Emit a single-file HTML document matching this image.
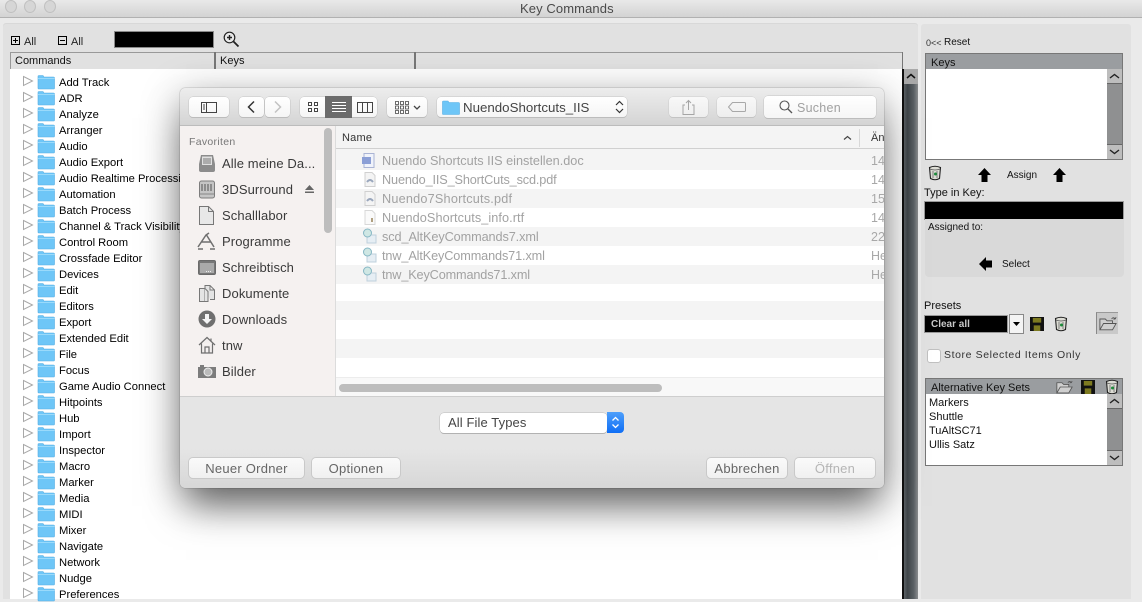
<!DOCTYPE html>
<html><head><meta charset="utf-8"><style>
html,body{margin:0;padding:0}
body{width:1142px;height:599px;overflow:hidden;position:relative;background:#eaeaea;font-family:"Liberation Sans",sans-serif;color:#000}
.a,.t,.r,.f span{position:absolute}
.t{white-space:nowrap;font-size:11px;line-height:14px;margin-top:1px}
.row{position:absolute;left:22px;width:170px;height:16px}
.row svg{position:absolute;left:0;top:0}
.row span{position:absolute;left:37px;top:2px;font-size:11.2px;line-height:14px;white-space:nowrap}
.side{position:absolute;left:198px;font-size:13px;color:#3a3a3a;white-space:nowrap;line-height:16px;letter-spacing:.1px;margin-top:1px}
.frow{position:absolute;left:156px;width:548px;height:19px;background:#f4f4f4}
.frow.w{background:#fff}
.ft{position:absolute;left:202px;font-size:12.7px;color:#a2a2a2;white-space:nowrap;line-height:15px;margin-top:1px}
.dt{position:absolute;left:691px;font-size:12.5px;color:#a8a8a8;line-height:15px;white-space:nowrap;width:13px;overflow:hidden;margin-top:1px}
.btn{position:absolute;background:linear-gradient(#fff,#f5f5f5);border-radius:4px;box-shadow:0 0 0 .5px #c4c4c4,0 1px 0 #b4b4b4;box-sizing:border-box}
.bt{position:absolute;background:linear-gradient(#fafafa,#f0f0f0);border-radius:4px;box-shadow:0 0 0 1px #c9c9c9,0 1px 0 #bbb;text-align:center;font-size:13px;line-height:22px;color:#666;white-space:nowrap;letter-spacing:.25px}
</style></head><body>
<svg width="0" height="0" style="position:absolute"><defs>
<symbol id="row" viewBox="0 0 36 16"><path d="M1.500 2.500 L10.500 7 L1.500 11.500Z" fill="#fff" stroke="#a8a8a8"/><path d="M16 14V2.500Q16 1.500 17 1.500H21L22 3H31.500Q32.500 3 32.500 4V14Q32.500 15 31.500 15H17Q16 15 16 14Z" fill="#6ec6f7" stroke="#57aee3" stroke-width=".6"/><path d="M16 4.500H32.500" stroke="#9adafb"/></symbol>
<symbol id="trash" viewBox="0 0 14 16"><path d="M1.500 2.500Q7 0 12.500 2.500L11.500 13.500Q7 16 2.500 13.500Z" fill="#dcdcd4" stroke="#222" stroke-width="1.100"/><path d="M2 4Q7 6 12 4M5 6V13M9 6V13" stroke="#555" fill="none" stroke-width=".7"/><circle cx="7.500" cy="9" r="1.500" fill="#1d8b3a"/></symbol>
<symbol id="disk" viewBox="0 0 15 15"><path d="M0 0H15V15H0Z" fill="#111"/><path d="M3 1H12V6H3Z" fill="#7d7a20"/><path d="M4 9H11V15H4Z" fill="#7d7a20"/></symbol>
<symbol id="open" viewBox="0 0 20 16"><path d="M1 15V3H7L9 5H15V8M1 15L5 8H19L15 15Z" fill="#cfcfcf" stroke="#555" stroke-width="1"/><path d="M14 3Q16 0 18 3M18 3L19 1M18 3L16 3" stroke="#555" fill="none"/></symbol>
</defs></svg>

<!-- titlebar -->
<div class="a" style="left:0;top:0;width:1142px;height:17px;background:linear-gradient(#e9e9e9,#d3d3d3);border-bottom:1px solid #b1b1b1"></div>
<div class="a" style="left:5px;top:0;width:10px;height:11px;border-radius:50%;background:#d6d6d6;border:1px solid #c0c0c0"></div>
<div class="a" style="left:24px;top:0;width:10px;height:11px;border-radius:50%;background:#d6d6d6;border:1px solid #c0c0c0"></div>
<div class="a" style="left:44px;top:0;width:10px;height:11px;border-radius:50%;background:#d6d6d6;border:1px solid #c0c0c0"></div>
<div class="t" style="left:520px;top:0;font-size:13px;line-height:15px;color:#4a4a4a;letter-spacing:.1px">Key Commands</div>

<!-- main panels -->
<div class="a" style="left:3px;top:24px;width:915px;height:575px;background:#e1e1e1;border-radius:3px 3px 0 0;box-shadow:0 -1px 0 #d8d8d8"></div>
<div class="a" style="left:921px;top:24px;width:210px;height:575px;background:#e1e1e1;border-radius:3px 3px 0 0"></div>

<!-- toolbar -->
<div class="a" style="left:11px;top:36px;width:7px;height:7px;border:1px solid #000"></div><div class="a" style="left:13px;top:40px;width:5px;height:1px;background:#000"></div><div class="a" style="left:15px;top:38px;width:1px;height:5px;background:#000"></div>
<div class="t" style="left:24px;top:34px;font-size:11px;color:#222">All</div>
<div class="a" style="left:58px;top:36px;width:7px;height:7px;border:1px solid #000"></div><div class="a" style="left:60px;top:40px;width:5px;height:1px;background:#000"></div>
<div class="t" style="left:71px;top:34px;font-size:11px;color:#222">All</div>
<div class="a" style="left:115px;top:32px;width:98px;height:15px;background:#000;box-shadow:0 0 0 1px #8a8a8a"></div>
<svg class="a" style="left:222px;top:30px" width="18" height="18" viewBox="0 0 18 18"><circle cx="7.500" cy="7.500" r="5.300" fill="#e8e8e8" stroke="#222" stroke-width="1.200"/><path d="M5 7.500H10M7.500 5V10" stroke="#222" stroke-width="1.400"/><path d="M11.500 11.500L16.500 16.500" stroke="#222" stroke-width="1.800"/></svg>

<!-- header -->
<div class="a" style="left:10px;top:52px;width:893px;height:16px;background:#e1e1e1;border-top:1px solid #999;border-bottom:1px solid #666;box-sizing:content-box"></div>
<div class="a" style="left:10px;top:52px;width:1px;height:17px;background:#999"></div>
<div class="a" style="left:214px;top:52px;width:2px;height:17px;background:#777"></div>
<div class="a" style="left:414px;top:52px;width:2px;height:17px;background:#777"></div>
<div class="a" style="left:902px;top:52px;width:1px;height:17px;background:#777"></div>
<div class="t" style="left:15px;top:53px;font-size:11px;color:#111">Commands</div>
<div class="t" style="left:220px;top:53px;font-size:11px;color:#111">Keys</div>

<!-- tree -->
<div class="a" style="left:10px;top:69px;width:893px;height:530px;background:#fff"></div>
<div class="a" style="left:902px;top:69px;width:2px;height:530px;background:#111"></div>
<div class="a" style="left:904px;top:69px;width:14px;height:15px;background:#a9a9a9;border:0"></div>
<svg class="a" style="left:904px;top:69px" width="14" height="15"><path d="M3 9L7 5.500L11 9" stroke="#111" stroke-width="1.500" fill="none"/></svg>
<div class="a" style="left:904px;top:84px;width:14px;height:515px;background:linear-gradient(90deg,#5c6266,#3f4549 25%,#5b6165 70%,#8a8c8e)"></div>

<div class="row" style="top:74px"><svg width="36" height="16"><use href="#row"/></svg><span>Add Track</span></div>
<div class="row" style="top:90px"><svg width="36" height="16"><use href="#row"/></svg><span>ADR</span></div>
<div class="row" style="top:106px"><svg width="36" height="16"><use href="#row"/></svg><span>Analyze</span></div>
<div class="row" style="top:122px"><svg width="36" height="16"><use href="#row"/></svg><span>Arranger</span></div>
<div class="row" style="top:138px"><svg width="36" height="16"><use href="#row"/></svg><span>Audio</span></div>
<div class="row" style="top:154px"><svg width="36" height="16"><use href="#row"/></svg><span>Audio Export</span></div>
<div class="row" style="top:170px"><svg width="36" height="16"><use href="#row"/></svg><span>Audio Realtime Processing</span></div>
<div class="row" style="top:186px"><svg width="36" height="16"><use href="#row"/></svg><span>Automation</span></div>
<div class="row" style="top:202px"><svg width="36" height="16"><use href="#row"/></svg><span>Batch Process</span></div>
<div class="row" style="top:218px"><svg width="36" height="16"><use href="#row"/></svg><span>Channel &amp; Track Visibility</span></div>
<div class="row" style="top:234px"><svg width="36" height="16"><use href="#row"/></svg><span>Control Room</span></div>
<div class="row" style="top:250px"><svg width="36" height="16"><use href="#row"/></svg><span>Crossfade Editor</span></div>
<div class="row" style="top:266px"><svg width="36" height="16"><use href="#row"/></svg><span>Devices</span></div>
<div class="row" style="top:282px"><svg width="36" height="16"><use href="#row"/></svg><span>Edit</span></div>
<div class="row" style="top:298px"><svg width="36" height="16"><use href="#row"/></svg><span>Editors</span></div>
<div class="row" style="top:314px"><svg width="36" height="16"><use href="#row"/></svg><span>Export</span></div>
<div class="row" style="top:330px"><svg width="36" height="16"><use href="#row"/></svg><span>Extended Edit</span></div>
<div class="row" style="top:346px"><svg width="36" height="16"><use href="#row"/></svg><span>File</span></div>
<div class="row" style="top:362px"><svg width="36" height="16"><use href="#row"/></svg><span>Focus</span></div>
<div class="row" style="top:378px"><svg width="36" height="16"><use href="#row"/></svg><span>Game Audio Connect</span></div>
<div class="row" style="top:394px"><svg width="36" height="16"><use href="#row"/></svg><span>Hitpoints</span></div>
<div class="row" style="top:410px"><svg width="36" height="16"><use href="#row"/></svg><span>Hub</span></div>
<div class="row" style="top:426px"><svg width="36" height="16"><use href="#row"/></svg><span>Import</span></div>
<div class="row" style="top:442px"><svg width="36" height="16"><use href="#row"/></svg><span>Inspector</span></div>
<div class="row" style="top:458px"><svg width="36" height="16"><use href="#row"/></svg><span>Macro</span></div>
<div class="row" style="top:474px"><svg width="36" height="16"><use href="#row"/></svg><span>Marker</span></div>
<div class="row" style="top:490px"><svg width="36" height="16"><use href="#row"/></svg><span>Media</span></div>
<div class="row" style="top:506px"><svg width="36" height="16"><use href="#row"/></svg><span>MIDI</span></div>
<div class="row" style="top:522px"><svg width="36" height="16"><use href="#row"/></svg><span>Mixer</span></div>
<div class="row" style="top:538px"><svg width="36" height="16"><use href="#row"/></svg><span>Navigate</span></div>
<div class="row" style="top:554px"><svg width="36" height="16"><use href="#row"/></svg><span>Network</span></div>
<div class="row" style="top:570px"><svg width="36" height="16"><use href="#row"/></svg><span>Nudge</span></div>
<div class="row" style="top:586px"><svg width="36" height="16"><use href="#row"/></svg><span>Preferences</span></div>

<!-- right panel -->
<div class="t" style="left:926px;top:35px;font-size:9px;color:#333">0&lt;&lt;</div>
<div class="t" style="left:944px;top:35px;font-size:10px;color:#111">Reset</div>
<div class="a" style="left:925px;top:53px;width:198px;height:107px;box-sizing:border-box;border:1px solid #777;background:#fff"></div>
<div class="a" style="left:926px;top:54px;width:196px;height:15px;background:#9a9da0"></div>
<div class="t" style="left:931px;top:55px;font-size:11px;color:#111">Keys</div>
<div class="a" style="left:1107px;top:69px;width:15px;height:90px;background:#8f9091"></div>
<div class="a" style="left:1107px;top:69px;width:15px;height:15px;background:#bdbdbd;border-bottom:1px solid #666;box-sizing:border-box"></div>
<svg class="a" style="left:1107px;top:69px" width="15" height="15"><path d="M3 9L7.500 5.500L12 9" stroke="#222" stroke-width="1.400" fill="none"/></svg>
<div class="a" style="left:1107px;top:144px;width:15px;height:15px;background:#bdbdbd;border-top:1px solid #666;box-sizing:border-box"></div>
<svg class="a" style="left:1107px;top:144px" width="15" height="15"><path d="M3 6L7.500 9.500L12 6" stroke="#222" stroke-width="1.400" fill="none"/></svg>

<svg class="a" style="left:928px;top:165px" width="14" height="16"><use href="#trash"/></svg>
<svg class="a" style="left:977px;top:168px" width="15" height="14"><path d="M7.500 0L14 7H10.500V14H4.500V7H1Z" fill="#000"/></svg>
<div class="t" style="left:1007px;top:168px;font-size:10px;color:#111">Assign</div>
<svg class="a" style="left:1052px;top:168px" width="15" height="14"><path d="M7.500 0L14 7H10.500V14H4.500V7H1Z" fill="#000"/></svg>
<div class="t" style="left:924px;top:185px;font-size:11px;color:#111">Type in Key:</div>
<div class="a" style="left:925px;top:202px;width:198px;height:17px;background:#000;box-shadow:0 0 0 1px #999"></div>
<div class="a" style="left:925px;top:219px;width:199px;height:58px;background:#d9d9d9;border-radius:0 0 4px 4px"></div>
<div class="t" style="left:928px;top:220px;font-size:10px;color:#111">Assigned to:</div>
<svg class="a" style="left:979px;top:257px" width="14" height="14"><path d="M0 7L7 0V3.500H13V10.500H7V14Z" fill="#000"/></svg>
<div class="t" style="left:1002px;top:257px;font-size:10px;color:#111">Select</div>

<div class="t" style="left:924px;top:298px;font-size:11px;color:#111">Presets</div>
<div class="a" style="left:925px;top:316px;width:82px;height:16px;background:#000;box-shadow:0 0 0 1px #999"></div>
<div class="t" style="left:931px;top:317px;font-size:10px;font-weight:bold;color:#c8c8c8">Clear all</div>
<div class="a" style="left:1010px;top:315px;width:13px;height:18px;background:#f4f4f4;box-shadow:0 0 0 1px #888"></div>
<svg class="a" style="left:1012px;top:322px" width="9" height="5"><path d="M1 0H8L4.500 4Z" fill="#000"/></svg>
<svg class="a" style="left:1030px;top:317px" width="14" height="14"><use href="#disk"/></svg>
<svg class="a" style="left:1054px;top:316px" width="14" height="16"><use href="#trash"/></svg>
<div class="a" style="left:1096px;top:312px;width:22px;height:22px;background:#c9c9c9;border-left:1px solid #888;border-top:1px solid #999;box-sizing:border-box"></div>
<svg class="a" style="left:1099px;top:316px" width="18" height="15"><use href="#open"/></svg>
<div class="a" style="left:927px;top:349px;width:12px;height:12px;background:#fff;border:1px solid #c0c0c0;border-radius:3px"></div>
<div class="t" style="left:944px;top:347px;font-size:10.500px;color:#333;letter-spacing:.6px">Store Selected Items Only</div>

<div class="a" style="left:925px;top:378px;width:198px;height:88px;box-sizing:border-box;border:1px solid #777;background:#fff"></div>
<div class="a" style="left:926px;top:379px;width:196px;height:15px;background:#9a9da0"></div>
<div class="t" style="left:931px;top:380px;font-size:11px;color:#111">Alternative Key Sets</div>
<svg class="a" style="left:1056px;top:380px" width="17" height="14"><use href="#open"/></svg>
<svg class="a" style="left:1081px;top:380px" width="14" height="14"><use href="#disk"/></svg>
<svg class="a" style="left:1105px;top:379px" width="14" height="16"><use href="#trash"/></svg>
<div class="t" style="left:929px;top:395px;font-size:11px;color:#111">Markers</div>
<div class="t" style="left:929px;top:409px;font-size:11px;color:#111">Shuttle</div>
<div class="t" style="left:929px;top:423px;font-size:11px;color:#111">TuAltSC71</div>
<div class="t" style="left:929px;top:437px;font-size:11px;color:#111">Ullis Satz</div>
<div class="a" style="left:1107px;top:394px;width:15px;height:71px;background:#8f9091"></div>
<div class="a" style="left:1107px;top:394px;width:15px;height:15px;background:#bdbdbd;border-bottom:1px solid #666;box-sizing:border-box"></div>
<svg class="a" style="left:1107px;top:394px" width="15" height="15"><path d="M3 9L7.500 5.500L12 9" stroke="#222" stroke-width="1.400" fill="none"/></svg>
<div class="a" style="left:1107px;top:450px;width:15px;height:15px;background:#bdbdbd;border-top:1px solid #666;box-sizing:border-box"></div>
<svg class="a" style="left:1107px;top:450px" width="15" height="15"><path d="M3 6L7.500 9.500L12 6" stroke="#222" stroke-width="1.400" fill="none"/></svg>

<!-- dialog -->
<div class="a" style="left:180px;top:88px;width:704px;height:400px;border-radius:5px;overflow:hidden;background:#e5e5e5;box-shadow:0 24px 36px -6px rgba(0,0,0,.5),0 6px 40px rgba(0,0,0,.28),0 0 1px rgba(0,0,0,.6)">
 <div class="a" style="left:0;top:0;width:704px;height:37px;background:linear-gradient(#ededed,#d4d4d4);border-bottom:1px solid #bcbcbc"></div>
 <div class="a" style="left:0;top:38px;width:155px;height:270px;background:#f5f1f0;border-right:1px solid #dcdcdc"></div>
 <div class="a" style="left:156px;top:38px;width:548px;height:270px;background:#fff"></div>
 <div class="a" style="left:156px;top:38px;width:548px;height:22px;background:#f4f4f4;border-bottom:1px solid #d0d0d0"></div>

 <div class="frow" style="top:61px;height:21px"></div><div class="frow w" style="top:82px"></div><div class="frow" style="top:101px"></div><div class="frow w" style="top:120px"></div><div class="frow" style="top:139px"></div><div class="frow w" style="top:158px"></div><div class="frow" style="top:177px"></div><div class="frow w" style="top:196px;height:17px"></div><div class="frow" style="top:213px"></div><div class="frow w" style="top:232px"></div><div class="frow" style="top:251px"></div><div class="frow w" style="top:270px"></div>
 <div class="a" style="left:156px;top:289px;width:548px;height:19px;background:#f8f8f8;border-top:1px solid #ececec;box-sizing:border-box"></div>
 <div class="a" style="left:159px;top:296px;width:323px;height:8px;border-radius:4px;background:#bdbdbd"></div>
 <div class="a" style="left:144px;top:40px;width:8px;height:105px;border-radius:4px;background:#bdbdbd"></div>

 <div class="t" style="left:162px;top:42px;font-size:11px;color:#333;letter-spacing:.2px">Name</div>
 <svg class="a" style="left:663px;top:47px" width="9" height="6"><path d="M1 4.500L4.500 1.500L8 4.500" stroke="#444" stroke-width="1.200" fill="none"/></svg>
 <div class="a" style="left:679px;top:41px;width:1px;height:18px;background:#d8d8d8"></div>
 <div class="t" style="left:691px;top:42px;font-size:11px;color:#333;width:13px;overflow:hidden">Änderungsdatum</div>

 <div class="a" style="left:0;top:1px;width:0;height:0">
 <svg class="a" style="left:182px;top:64px" width="14" height="15"><path d="M2 .5H12V14.500H2Z" fill="#f0f3fb" stroke="#aab4d4"/><path d="M0 4H9V11H0Z" fill="#8b9fd6"/></svg>
 <svg class="a" style="left:184px;top:83px" width="12" height="15"><path d="M1 .5H8L11 3.500V14.500H1Z" fill="#f4f4f4" stroke="#d0d0d0"/><path d="M3 10Q6 6 9 10" stroke="#9aa7bd" stroke-width="2" fill="none"/></svg>
 <svg class="a" style="left:184px;top:102px" width="12" height="15"><path d="M1 .5H8L11 3.500V14.500H1Z" fill="#f4f4f4" stroke="#d0d0d0"/><path d="M3 10Q6 6 9 10" stroke="#9aa7bd" stroke-width="2" fill="none"/></svg>
 <svg class="a" style="left:184px;top:121px" width="12" height="15"><path d="M1 .5H8L11 3.500V14.500H1Z" fill="#fafafa" stroke="#d8d8d8"/><path d="M7 8H9V12H7Z" fill="#b0a080"/></svg>
 <svg class="a" style="left:182px;top:139px" width="15" height="16"><path d="M5 7H14V15H5Z" fill="#e6eef4" stroke="#bfd0dc"/><circle cx="5.500" cy="5" r="4" fill="#cfe7e4" stroke="#86b7c4"/></svg>
 <svg class="a" style="left:182px;top:158px" width="15" height="16"><path d="M5 7H14V15H5Z" fill="#e6eef4" stroke="#bfd0dc"/><circle cx="5.500" cy="5" r="4" fill="#cfe7e4" stroke="#86b7c4"/></svg>
 <svg class="a" style="left:182px;top:177px" width="15" height="16"><path d="M5 7H14V15H5Z" fill="#e6eef4" stroke="#bfd0dc"/><circle cx="5.500" cy="5" r="4" fill="#cfe7e4" stroke="#86b7c4"/></svg>
 </div>

 <div class="ft" style="top:65px">Nuendo Shortcuts IIS einstellen.doc</div><div class="dt" style="top:65px">14.</div>
 <div class="ft" style="top:84px;letter-spacing:-.14px">Nuendo_IIS_ShortCuts_scd.pdf</div><div class="dt" style="top:84px">14.</div>
 <div class="ft" style="top:103px;letter-spacing:.2px">Nuendo7Shortcuts.pdf</div><div class="dt" style="top:103px">15.</div>
 <div class="ft" style="top:122px;letter-spacing:.08px">NuendoShortcuts_info.rtf</div><div class="dt" style="top:122px">14.</div>
 <div class="ft" style="top:141px;letter-spacing:-.09px">scd_AltKeyCommands7.xml</div><div class="dt" style="top:141px">22.</div>
 <div class="ft" style="top:160px;letter-spacing:-.12px">tnw_AltKeyCommands71.xml</div><div class="dt" style="top:160px">Heute</div>
 <div class="ft" style="top:179px;letter-spacing:-.14px">tnw_KeyCommands71.xml</div><div class="dt" style="top:179px">Heute</div>

 <!-- toolbar -->
 <div class="a" style="left:0;top:1px;width:0;height:0">
 <div class="btn" style="left:9px;top:8px;width:40px;height:20px"></div>
 <svg class="a" style="left:21px;top:13px" width="16" height="11"><path d="M.5 .5H15.500V10.500H.5ZM5.500 .5V10.500M2 3H4M2 5H4M2 7H4" stroke="#444" fill="none"/></svg>
 <div class="btn" style="left:59px;top:8px;width:25px;height:20px"></div>
 <svg class="a" style="left:66px;top:11px" width="10" height="14"><path d="M8 1.500L2.500 7L8 12.500" stroke="#333" stroke-width="1.500" fill="none"/></svg>
 <div class="btn" style="left:85px;top:8px;width:25px;height:20px"></div>
 <svg class="a" style="left:93px;top:11px" width="10" height="14"><path d="M2 1.500L7.500 7L2 12.500" stroke="#c2c2c2" stroke-width="1.500" fill="none"/></svg>

 <div class="btn" style="left:120px;top:8px;width:77px;height:20px"></div>
 <div class="a" style="left:145px;top:7px;width:27px;height:22px;background:#6b6b6b"></div>
 <svg class="a" style="left:128px;top:13px" width="10" height="10"><path d="M.5 .5H3.500V3.500H.5ZM6.500 .5H9.500V3.500H6.500ZM.5 6.500H3.500V9.500H.5ZM6.500 6.500H9.500V9.500H6.500Z" fill="#fff" stroke="#444" stroke-width="1"/></svg>
 <svg class="a" style="left:152px;top:13px" width="14" height="11"><path d="M0 .5H14M0 3.500H14M0 6.500H14M0 9.500H14" stroke="#fff"/></svg>
 <svg class="a" style="left:177px;top:13px" width="16" height="11"><path d="M.5 .5H15.500V10.500H.5ZM5.500 .5V10.500M10.500 .5V10.500" stroke="#444" fill="none"/></svg>

 <div class="btn" style="left:207px;top:8px;width:40px;height:20px"></div>
 <svg class="a" style="left:215px;top:12px" width="14" height="13"><path d="M.5 .5H3.500V3.500H.5ZM5.500 .5H8.500V3.500H5.500ZM10.500 .5H13.500V3.500H10.500ZM.5 5H3.500V8H.5ZM5.500 5H8.500V8H5.500ZM10.500 5H13.500V8H10.500ZM.5 9.500H3.500V12.500H.5ZM5.500 9.500H8.500V12.500H5.500ZM10.500 9.500H13.500V12.500H10.500Z" fill="#fff" stroke="#444" stroke-width=".8"/></svg>
 <svg class="a" style="left:233px;top:16px" width="8" height="6"><path d="M1 1L4 4L7 1" stroke="#444" stroke-width="1.300" fill="none"/></svg>

 <div class="btn" style="left:257px;top:8px;width:190px;height:20px"></div>
 <svg class="a" style="left:262px;top:11px" width="18" height="15"><path d="M.5 14V2Q.5 1 1.500 1H6L7 2.500H16.500Q17.500 2.500 17.500 3.500V14Q17.500 14.500 16.500 14.500H1.500Q.5 14.500 .5 14Z" fill="#6ec6f7" stroke="#57aee3" stroke-width=".6"/></svg>
 <div class="t" style="left:283px;top:10px;font-size:13.300px;line-height:16px;color:#444">NuendoShortcuts_IIS</div>
 <svg class="a" style="left:435px;top:11px" width="9" height="14"><path d="M1 5L4.500 1.500L8 5M1 9L4.500 12.500L8 9" stroke="#333" stroke-width="1.200" fill="none"/></svg>

 <div class="btn" style="left:489px;top:8px;width:39px;height:20px;opacity:.75"></div>
 <svg class="a" style="left:502px;top:10px" width="13" height="17"><path d="M3 6H1V15.500H12V6H10M6.500 11V1.500M4 4L6.500 1.500L9 4" stroke="#a5a5a5" fill="none"/></svg>
 <div class="btn" style="left:537px;top:8px;width:39px;height:20px;opacity:.75"></div>
 <svg class="a" style="left:548px;top:13px" width="18" height="10"><path d="M4.500 .5H16.500Q17.500 .5 17.500 1.500V8.500Q17.500 9.500 16.500 9.500H4.500L.5 5Z" fill="none" stroke="#a8a8a8"/></svg>
 <div class="btn" style="left:584px;top:7px;width:112px;height:22px"></div>
 <svg class="a" style="left:599px;top:11px" width="14" height="14"><circle cx="5.500" cy="5.500" r="4.500" fill="none" stroke="#555" stroke-width="1.100"/><path d="M9 9L13 13" stroke="#555" stroke-width="1.300"/></svg>
 <div class="t" style="left:617px;top:10px;font-size:12.500px;line-height:16px;color:#a0a0a0;letter-spacing:.25px">Suchen</div>
 </div>

 <!-- sidebar -->
 <div class="t" style="left:9px;top:46px;font-size:10.500px;color:#777;letter-spacing:.3px">Favoriten</div>
 <div class="side" style="left:42px;top:67px">Alle meine Da...</div>
 <div class="side" style="left:42px;top:93px">3DSurround</div>
 <div class="side" style="left:42px;top:119px">Schalllabor</div>
 <div class="side" style="left:42px;top:145px">Programme</div>
 <div class="side" style="left:42px;top:171px">Schreibtisch</div>
 <div class="side" style="left:42px;top:197px">Dokumente</div>
 <div class="side" style="left:42px;top:223px">Downloads</div>
 <div class="side" style="left:42px;top:249px">tnw</div>
 <div class="side" style="left:42px;top:275px">Bilder</div>
 <svg class="a" style="left:125px;top:97px" width="9" height="9"><path d="M4.500 0L9 5H0ZM0 6.500H9V8H0Z" fill="#666"/></svg>

 <svg class="a" style="left:18px;top:66px" width="18" height="19"><path d="M3 1H15L17 10V16Q17 18 15 18H3Q1 18 1 16V10Z" fill="#8c8c8c"/><path d="M4 2.500H14V11H4Z" fill="#e0e0e0"/><path d="M5 5H13M5 7H13M5 9H13" stroke="#777"/></svg>
 <svg class="a" style="left:18px;top:92px" width="18" height="19"><rect x=".5" y="1" width="15" height="17" rx="2" fill="#c5c5c5" stroke="#7d7d7d" transform="translate(1)"/><path d="M4 4V11M7 4V11M10 4V11M13 4V11" stroke="#666" stroke-width="1.200"/><path d="M2 14H16" stroke="#888"/></svg>
 <svg class="a" style="left:19px;top:118px" width="15" height="19"><path d="M.5.5H9.500L14.500 5.500V18.500H.5Z" fill="#e8e8e8" stroke="#777"/><path d="M9.500.5V5.500H14.500" fill="none" stroke="#777"/></svg>
 <svg class="a" style="left:17px;top:144px" width="19" height="18"><path d="M1 15L9 3L12 1M9.500 3L17 15M4 10H14M1 17H6M13 17H18" stroke="#6f6f6f" stroke-width="1.500" fill="none"/></svg>
 <svg class="a" style="left:18px;top:172px" width="18" height="15"><rect x=".5" y=".5" width="17" height="14" rx="1.500" fill="#777" stroke="#6a6a6a"/><rect x="2" y="3" width="14" height="10" fill="#aaa"/><path d="M8 11.500H13" stroke="#eee" stroke-dasharray="1 1"/></svg>
 <svg class="a" style="left:19px;top:197px" width="16" height="17"><path d="M.5 3.500H6V16.500H.5ZM6 5V.5H11L15.500 5V14.500H11M11 .5V5H15.500" fill="#e4e4e4" stroke="#777"/><path d="M6 3.500L9 6.500V16.500H6" fill="#e4e4e4" stroke="#777"/></svg>
 <svg class="a" style="left:18px;top:222px" width="18" height="18"><circle cx="9" cy="9" r="8.500" fill="#6f6f6f"/><path d="M7 4H11V9H14L9 14L4 9H7Z" fill="#f4f4f4"/></svg>
 <svg class="a" style="left:18px;top:248px" width="18" height="18"><path d="M1 9L9 1.500L17 9M3.500 7.500V17H14.500V7.500M7 17V11H11V17M13 2.500V5" stroke="#6f6f6f" stroke-width="1.200" fill="#f2eeed"/></svg>
 <svg class="a" style="left:18px;top:277px" width="18" height="13"><path d="M0 2H18V13H0Z" fill="#7c7c7c"/><path d="M2 0H6V2H2Z" fill="#7c7c7c"/><circle cx="10" cy="7" r="4" fill="#bbb" stroke="#eee"/></svg>

 <!-- bottom -->
 <div class="a" style="left:0;top:308px;width:704px;height:1px;background:#cecece"></div>
 <div class="a" style="left:0;top:361px;width:704px;height:39px;background:linear-gradient(#e5e5e5,#d7d7d7)"></div>
 <div class="a" style="left:260px;top:325px;width:167px;height:20px;background:#fff;border-radius:4px;box-shadow:0 0 0 .5px #bbb,0 1px 0 #aaa"></div>
 <div class="t" style="left:268px;top:325px;font-size:13px;line-height:17px;color:#444;letter-spacing:.1px">All File Types</div>
 <div class="a" style="left:427px;top:324px;width:17px;height:21px;background:linear-gradient(#4d9ffb,#0f6ef5);border-radius:0 4px 4px 0"></div>
 <svg class="a" style="left:431px;top:327px" width="9" height="15"><path d="M1.500 5.500L4.500 2.500L7.500 5.500M1.500 9.500L4.500 12.500L7.500 9.500" stroke="#fff" stroke-width="1.300" fill="none"/></svg>
 <div class="bt" style="left:9px;top:370px;width:115px;height:20px">Neuer Ordner</div>
 <div class="bt" style="left:132px;top:370px;width:88px;height:20px">Optionen</div>
 <div class="bt" style="left:527px;top:370px;width:80px;height:20px">Abbrechen</div>
 <div class="bt" style="left:615px;top:370px;width:80px;height:20px;color:#b5b5b5">Öffnen</div>
</div>
</body></html>
